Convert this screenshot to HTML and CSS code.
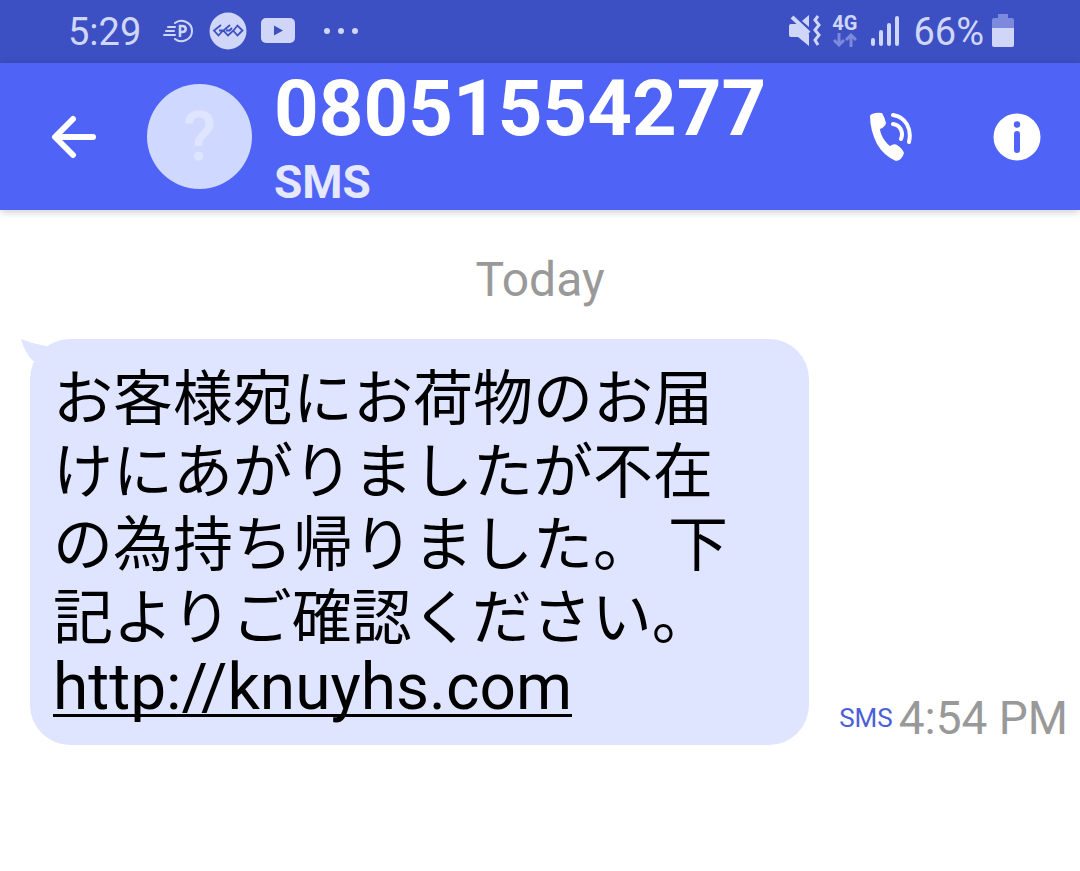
FILE: index.html
```
<!DOCTYPE html>
<html lang="ja">
<head>
    <meta charset="UTF-8">
    <meta name="viewport" content="width=device-width, initial-scale=1.0">
    <title>08051554277</title>
    <link rel="stylesheet" href="styles.css">
</head>
<body>
    <div class="status-bar">
        <div class="status-left">
            <span class="clock">5:29</span>
            <svg class="icon-pay" width="30" height="26" viewBox="0 0 30 26" fill="none" stroke="currentColor" stroke-width="2" stroke-linecap="round">
                <path d="M12 5C18 0 29 4 29 13C29 22 18 26 12 21"/>
                <path d="M5 9H12M3 13H11M1 17H12"/>
                <path d="M17 19V8H19C24 8 24 14 19 14H17" stroke-width="2.500" stroke-linecap="butt"/>
            </svg>
            <svg class="icon-geo" width="38" height="38" viewBox="0 0 38 38">
                <circle cx="19" cy="19" r="18.500" fill="currentColor"/>
                <path d="M12 13L5 18.500L9.500 23.500L14 18.500H10M21 13L14.500 18.500L19 23.500L24.500 18.500L28.500 13.500L33.500 18.500L28.500 23.500L24 18.500M17 18.500H20.500L23 16" fill="none" stroke="#3c50c3" stroke-width="1.800"/>
            </svg>
            <svg class="icon-video" width="34" height="25" viewBox="0 0 34 25">
                <rect width="34" height="25" rx="5" fill="currentColor"/>
                <path d="M13 7.500V17.500L22 12.500Z" fill="#3c50c3"/>
            </svg>
            <svg class="icon-more" width="36" height="8" viewBox="0 0 36 8" fill="currentColor">
                <circle cx="4" cy="4" r="3"/>
                <circle cx="18" cy="4" r="3"/>
                <circle cx="32" cy="4" r="3"/>
            </svg>
        </div>
        <div class="status-right">
            <svg class="icon-mute" width="32" height="32" viewBox="0 0 32 32">
                <path d="M2 9H8L20 19V31L9 22H2Q0 22 0 20V11Q0 9 2 9Z" fill="currentColor"/>
                <path d="M20 0V12L13 6Z" fill="currentColor"/>
                <path d="M3 2L20 18" stroke="currentColor" stroke-width="4"/>
                <path d="M29 1L26 5L30 10L26 15L30 20L26 25L29 30" fill="none" stroke="currentColor" stroke-width="3"/>
            </svg>
            <div class="network">
                <span>4G</span>
                <svg width="24" height="14" viewBox="0 0 24 14" fill="none" stroke="#7c89dc" stroke-width="3">
                    <path d="M6 0V12M1 7L6 12L11 7M18 14V2M13 7L18 2L23 7"/>
                </svg>
            </div>
            <svg class="icon-signal" width="28" height="32" viewBox="0 0 28 32" stroke="currentColor" stroke-width="4" stroke-linecap="round">
                <path d="M2 25V29M10 17V29M18 10V29M26 3V29"/>
            </svg>
            <span class="battery-text">66%</span>
            <svg class="icon-battery" width="22" height="33" viewBox="0 0 22 33">
                <path d="M6 0H16V4H20Q22 4 22 6V14H0V6Q0 4 2 4H6Z" fill="#7c89dc"/>
                <path d="M0 14H22V31Q22 33 20 33H2Q0 33 0 31Z" fill="currentColor"/>
            </svg>
        </div>
    </div>

    <header class="header">
        <button class="icon-btn back" aria-label="Back">
            <svg width="46" height="44" viewBox="0 0 46 44" fill="none" stroke="#fff" stroke-width="6" stroke-linecap="round" stroke-linejoin="round">
                <path d="M22 4L4 22L22 40M5 22H42"/>
            </svg>
        </button>
        <div class="avatar">?</div>
        <div class="contact">
            <h1 class="number">08051554277</h1>
            <p class="type">SMS</p>
        </div>
        <div class="actions">
            <button class="icon-btn" aria-label="Call">
                <svg width="44" height="50" viewBox="0 0 44 50">
                    <path d="M3 2Q8 0 13 1Q16 6 17 11Q16 15 11 17Q11 20 14 26Q18 32 21 34Q25 31 28 33Q33 36 35 41Q33 48 27 49Q15 44 8 32Q1 18 1 4Q1 3 3 2Z" fill="#fff"/>
                    <path d="M24 12C31 13 35 20 32 27M24 3C37 5 43 17 40 30" fill="none" stroke="#fff" stroke-width="4" stroke-linecap="round"/>
                </svg>
            </button>
            <button class="icon-btn" aria-label="Details">
                <svg width="48" height="48" viewBox="0 0 48 48">
                    <circle cx="24" cy="24" r="23.500" fill="#fff"/>
                    <circle cx="24" cy="11.500" r="3.200" fill="#4f64f6"/>
                    <path d="M24 21V37" stroke="#4f64f6" stroke-width="6" stroke-linecap="round"/>
                </svg>
            </button>
        </div>
    </header>

    <main class="messages">
        <p class="day">Today</p>
        <div class="message">
            <div class="bubble">
                <svg class="tail" width="34" height="34" viewBox="0 0 34 34">
                    <path d="M0 0Q12 5 25 7L34 20L12 22Q4 14 0 0Z" fill="#e0e5ff"/>
                </svg>
                <p>お客様宛にお荷物のお届けにあがりましたが不在の為持ち帰りました。 下記よりご確認ください。</p>
                <a href="http://knuyhs.com">http://knuyhs.com</a>
            </div>
            <div class="meta">
                <span class="meta-type">SMS</span>
                <time class="meta-time">4:54 PM</time>
            </div>
        </div>
    </main>
</body>
</html>
```
FILE: styles.css
```
* {
    box-sizing: border-box;
    margin: 0;
    padding: 0;
}

body {
    min-height: 100vh;
    background-color: #fff;
    font-family: Roboto, 'Noto Sans CJK JP', sans-serif;
}

svg {
    display: block;
    flex-shrink: 0;
}

/* Status bar */

.status-bar {
    display: flex;
    justify-content: space-between;
    align-items: center;
    height: 63px;
    padding: 0 66px 2px 68px;
    background-color: #3c50c3;
    color: #d0d6f8;
    font-size: 38px;
    line-height: 44px;
}

.clock,
.battery-text {
    padding-top: 3px;
}

.status-left,
.status-right {
    display: flex;
    align-items: center;
}

.icon-pay {
    margin-left: 22px;
}

.icon-geo {
    margin-left: 16px;
}

.icon-video {
    margin-left: 14px;
}

.icon-more {
    margin-left: 28px;
}

.network {
    display: flex;
    flex-direction: column;
    align-items: center;
    gap: 2px;
    margin-left: 11px;
    font-size: 20px;
    font-weight: 700;
    line-height: 16px;
}

.icon-signal {
    margin-left: 14px;
}

.battery-text {
    margin-left: 14px;
}

.icon-battery {
    margin-left: 8px;
}

/* Header */

.header {
    display: flex;
    align-items: center;
    height: 147px;
    padding: 0 39px 0 51px;
    background-color: #4f64f6;
    color: #fff;
    box-shadow: 0 2px 8px rgba(0,0,0,0.2);
}

.icon-btn {
    border: none;
    background: none;
    cursor: pointer;
}

.avatar {
    display: flex;
    justify-content: center;
    align-items: center;
    width: 105px;
    height: 105px;
    margin-left: 50px;
    border-radius: 50%;
    background-color: #cfd8ff;
    color: #e0e5ff;
    font-size: 68px;
    font-weight: 500;
}

.contact {
    flex: 1;
    margin-left: 22px;
    padding-top: 6px;
}

.number {
    font-size: 78px;
    line-height: 84px;
}

.type {
    color: #e5e8fe;
    font-size: 46px;
    font-weight: 700;
    line-height: 62px;
}

.actions {
    display: flex;
    align-items: center;
    gap: 80px;
}

/* Messages */

.messages {
    padding: 40px 12px 40px 30px;
}

.day {
    color: #999;
    font-size: 48px;
    line-height: 60px;
    text-align: center;
    padding-right: 18px;
}

.message {
    display: flex;
    align-items: flex-end;
    gap: 30px;
    margin-top: 29px;
}

.bubble {
    position: relative;
    flex: 1;
    padding: 24px 60px 24px 23px;
    border-radius: 40px;
    background-color: #e0e5ff;
    color: #000;
    font-size: 60px;
    line-height: 73px;
}

.bubble a {
    display: block;
    color: inherit;
    font-size: 64px;
    line-height: 66px;
    text-decoration-thickness: 3px;
    text-decoration-skip-ink: none;
    text-underline-offset: 5px;
}

.tail {
    position: absolute;
    top: 0;
    left: -9px;
}

.meta {
    display: flex;
    align-items: center;
    gap: 6px;
    white-space: nowrap;
}

.meta-type {
    color: #4a60d8;
    font-size: 26px;
}

.meta-time {
    color: #999;
    font-size: 46px;
    line-height: 54px;
}
```
